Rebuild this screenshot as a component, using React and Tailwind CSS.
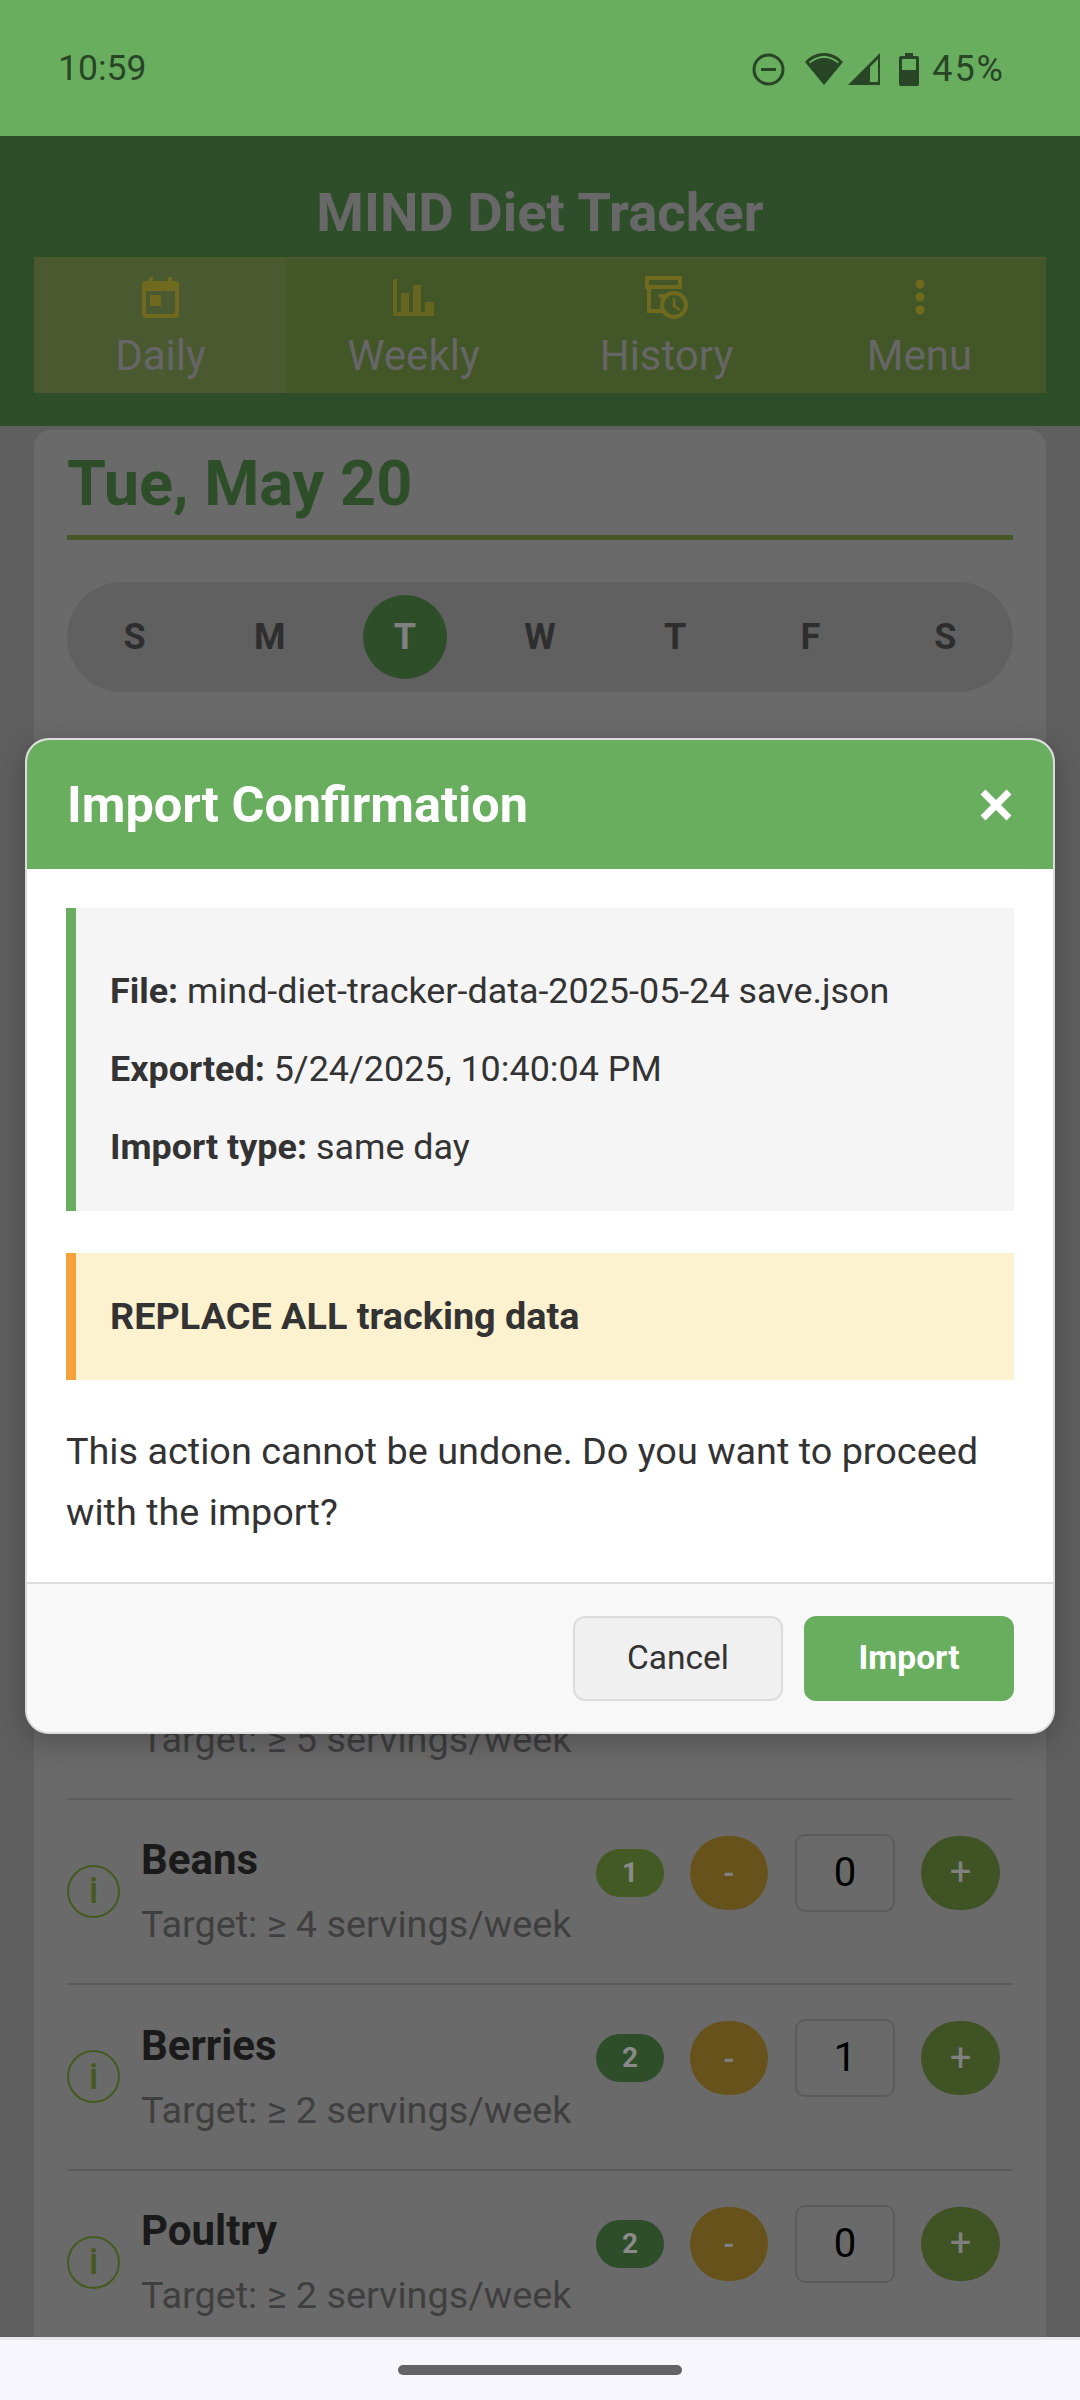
import React from 'react';

const days = ['S', 'M', 'T', 'W', 'T', 'F', 'S'];

// rows of the list behind the dialog
const foods = [
    { name: 'Beans', target: 'Target: ≥ 4 servings/week', badge: 1, value: 0, badgeBg: 'bg-[#445a24]' },
    { name: 'Berries', target: 'Target: ≥ 2 servings/week', badge: 2, value: 1, badgeBg: 'bg-[#2e4e2a]' },
    { name: 'Poultry', target: 'Target: ≥ 2 servings/week', badge: 2, value: 0, badgeBg: 'bg-[#2e4e2a]' },
];

const CalendarIcon = () => (
    <svg width="37" height="41" viewBox="0 0 37 41" fill="#6f6a1e">
        <path fillRule="evenodd" d="M7 0h4v4h15V0h4v4h3a4 4 0 0 1 4 4v29a4 4 0 0 1-4 4H4a4 4 0 0 1-4-4V8a4 4 0 0 1 4-4h3zM4 14v23h29V14z" />
        <rect x="8" y="18" width="11" height="11" />
    </svg>
);

const BarsIcon = () => (
    <svg width="41" height="37" viewBox="0 0 41 37" fill="#666620">
        <path d="M0 0h4v33h4V14h8v19h4V6h8v27h4V23h9v14H0z" />
    </svg>
);

const HistoryIcon = () => (
    <svg width="43" height="43" viewBox="0 0 43 43" fill="none" stroke="#6f6a1e" strokeWidth="4">
        <rect x="2" y="2" width="33" height="9" />
        <path d="M4 11v24h14M14 20h8" />
        <circle cx="29" cy="29" r="12" />
        <path d="M29 22v8l6 4" strokeWidth="2.5" />
    </svg>
);

const DotsIcon = () => (
    <svg width="10" height="36" viewBox="0 0 10 36" fill="#6f6a1e">
        <circle cx="5" cy="5" r="4.5" />
        <circle cx="5" cy="18" r="4.5" />
        <circle cx="5" cy="31" r="4.5" />
    </svg>
);

const tabs = [
    { label: 'Daily', icon: <CalendarIcon />, active: true },
    { label: 'Weekly', icon: <BarsIcon /> },
    { label: 'History', icon: <HistoryIcon /> },
    { label: 'Menu', icon: <DotsIcon /> },
];

const StatusBar = () => (
    <div className="h-[136px] shrink-0 bg-[#69ae5f] flex items-center justify-between pl-[58px] pr-[75px] pt-[2px] text-[#284526]">
        <span className="text-[35.5px]">10:59</span>
        <div className="flex items-center">
            <svg width="33" height="33" viewBox="0 0 33 33" fill="none" stroke="#284526" strokeWidth="3">
                <circle cx="16.5" cy="16.5" r="14.5" />
                <path d="M9 16.5h15" />
            </svg>
            <svg className="ml-[20px]" width="38" height="32" viewBox="0 0 38 32" fill="#284526">
                <path d="M19 32 0 9C5 3 12 0 19 0s14 3 19 9zM4 9l1 1.5C9 7 14 5 19 5s10 2 14 5.5L34 9c-4-3.500-9.500-6-15-6S8 5.500 4 9z" fillRule="evenodd" />
            </svg>
            <svg className="ml-[5px]" width="32" height="32" viewBox="0 0 32 32" fill="#284526">
                <path fillRule="evenodd" d="M32 0v32H0zM30 6 22 14v15h8z" />
            </svg>
            <svg className="ml-[19px]" width="20" height="33" viewBox="0 0 20 33" fill="#284526">
                <path fillRule="evenodd" d="M6 0h8v3h4a2 2 0 0 1 2 2v26a2 2 0 0 1-2 2H2a2 2 0 0 1-2-2V5a2 2 0 0 1 2-2h4zM3 6v11h14V6z" />
            </svg>
            <span className="ml-[13px] text-[36px] tracking-[2px]">45%</span>
        </div>
    </div>
);

const FoodRow = ({ food }) => (
    <div className="h-[185.5px] border-b-2 border-[#5c5c5c] flex items-center">
        <div className="w-[53px] h-[53px] rounded-full border-2 border-[#46591f] flex items-center justify-center text-[36px] font-medium text-[#46591f] shrink-0">
            i
        </div>
        <div className="ml-[21px] flex-1">
            <div className="text-[42px] leading-[50px] font-bold text-[#1a1a1a]">{food.name}</div>
            <div className="mt-[16px] text-[37.8px] leading-[46px] text-[#3f3f3f]">{food.target}</div>
        </div>
        <div className="self-start mt-[34px] flex items-center mr-[13px]">
            <span className={`w-[68px] h-[48px] rounded-full flex items-center justify-center text-[28px] font-bold text-[#8a8a8a] ${food.badgeBg}`}>
                {food.badge}
            </span>
            <span className="ml-[26px] w-[78px] h-[74px] rounded-full bg-[#66521a] flex items-center justify-center text-[30px] font-bold text-[#808080]">-</span>
            <span className="ml-[27px] w-[100px] h-[78px] rounded-[10px] border-2 border-[#5c5c5c] flex items-center justify-center text-[40px] text-black">
                {food.value}
            </span>
            <span className="ml-[26px] w-[79px] h-[74px] rounded-full bg-[#3f5324] flex items-center justify-center text-[38px] text-[#808080]">+</span>
        </div>
    </div>
);

const ImportDialog = () => (
    <div className="absolute left-[25px] top-[312px] w-[1030px] h-[996px] rounded-[24px] border-2 border-[#dcdcdc] bg-white overflow-hidden shadow-[0_8px_30px_rgba(0,0,0,0.25)]">
        <div className="h-[129px] bg-[#69ae5f] flex items-center justify-between pl-[40px] pr-[41px]">
            <h3 className="text-[50.4px] font-bold text-white">Import Confirmation</h3>
            <svg width="32" height="32" viewBox="0 0 32 32" stroke="white" strokeWidth="7">
                <path d="M3 3l26 26M29 3 3 29" />
            </svg>
        </div>
        <div className="px-[39px] pt-[39px] pb-[39px] text-[#333333]">
            <div className="h-[303px] border-l-[10px] border-[#69ae5f] bg-[#f5f5f5] pl-[34px] pt-[56px] flex flex-col gap-[24px] text-[35.9px] leading-[54px]">
                <p><strong>File:</strong> mind-diet-tracker-data-2025-05-24 save.json</p>
                <p><strong>Exported:</strong> 5/24/2025, 10:40:04 PM</p>
                <p><strong>Import type:</strong> same day</p>
            </div>
            <div className="mt-[42px] h-[127px] border-l-[10px] border-[#f5a23c] bg-[#fdf2d0] pl-[34px] flex items-center text-[37.8px] font-bold">
                REPLACE ALL tracking data
            </div>
            <p className="mt-[41px] text-[37.8px] leading-[61px]">
                This action cannot be undone. Do you want to proceed with the import?
            </p>
        </div>
        <div className="h-[150px] border-t-2 border-[#dcdcdc] bg-[#f8f8f8] flex justify-end items-start gap-[21px] pt-[32px] pr-[39px]">
            <button className="w-[210px] h-[85px] rounded-[12px] border-2 border-[#dcdcdc] bg-[#f0f0f0] text-[33.5px] text-[#333333]">Cancel</button>
            <button className="w-[210px] h-[85px] rounded-[12px] bg-[#69ae5f] text-[33.5px] font-bold text-white">Import</button>
        </div>
    </div>
);

const App = () => {
    return (
        <div className="h-screen w-full flex flex-col overflow-hidden font-['Roboto',sans-serif]">
            <StatusBar />

            <header className="h-[290px] shrink-0 bg-[#2e4e2a] px-[34px] pt-[38px]">
                <h1 className="h-[83px] text-[54.5px] leading-[76px] font-bold text-center text-[#686868]">MIND Diet Tracker</h1>
                <nav className="h-[136px] grid grid-cols-4 bg-[#435628] border-t-2 border-[#4b5829]">
                    {tabs.map((tab) => (
                        <div key={tab.label} className={`flex flex-col items-center ${tab.active ? 'bg-[#4a5930]' : ''}`}>
                            <div className="h-[64px] mt-[6px] flex items-center justify-center">{tab.icon}</div>
                            <span className="mt-[3px] text-[42px] leading-[48px] text-[#666666]">{tab.label}</span>
                        </div>
                    ))}
                </nav>
            </header>

            <main className="relative flex-1 overflow-hidden bg-[#5f5f5f] px-[34px] pt-[4px]">
                <div className="rounded-t-[16px] bg-[#6a6a6a] px-[33px] h-full">
                    <h2 className="pt-[18px] pb-[15px] text-[63px] leading-[72px] font-bold text-[#2e4e2a] border-b-[5px] border-[#465726]">
                        Tue, May 20
                    </h2>
                    <div className="mt-[42px] h-[110px] rounded-full bg-[#606060] grid grid-cols-7 items-center">
                        {days.map((day, i) => (
                            <div key={i} className="flex justify-center">
                                <span className={`w-[84px] h-[84px] rounded-full flex items-center justify-center text-[36px] font-bold ${i === 2 ? 'bg-[#2e4e2a] text-[#808080]' : 'text-[#2e2e2e]'}`}>
                                    {day}
                                </span>
                            </div>
                        ))}
                    </div>
                    {/* only the last line of this row shows below the dialog */}
                    <div className="mt-[922px] h-[185.5px] border-b-2 border-[#5c5c5c] pl-[74px] pt-[102px] text-[37.8px] leading-[46px] text-[#3f3f3f]">
                        Target: ≥ 5 servings/week
                    </div>
                    {foods.map((food) => (
                        <FoodRow key={food.name} food={food} />
                    ))}
                </div>
                <ImportDialog />
            </main>

            <div className="h-[63px] shrink-0 bg-[#f8f6fd] border-t-[3px] border-[#e6e5ea] flex items-center justify-center">
                <div className="w-[284px] h-[10px] rounded-full bg-[#636366]" />
            </div>
        </div>
    );
};

export default App;
